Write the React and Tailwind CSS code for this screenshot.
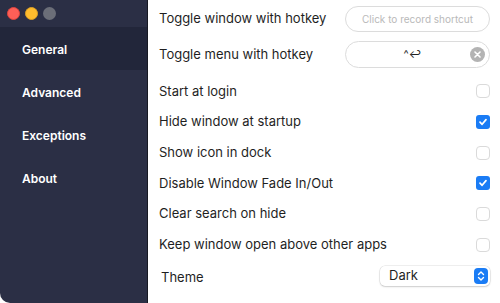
import { useState } from "react";

const FONT = { fontFamily: "Inter, 'Liberation Sans', sans-serif" };

const navItems = ["General", "Advanced", "Exceptions", "About"];

const settings = [
  { label: "Start at login", checked: false },
  { label: "Hide window at startup", checked: true },
  { label: "Show icon in dock", checked: false },
  { label: "Disable Window Fade In/Out", checked: true },
  { label: "Clear search on hide", checked: false },
  { label: "Keep window open above other apps", checked: false },
];

function Checkbox({ checked, onChange }) {
  if (checked) {
    return (
      <button
        onClick={onChange}
        className="w-[14px] h-[14px] rounded-[3px] bg-[#1a7cf5] flex items-center justify-center"
      >
        <svg width="10" height="10" viewBox="0 0 10 10">
          <path d="M2 5.2 L4.1 7.3 L8 2.6" fill="none" stroke="white" strokeWidth="1.7" strokeLinecap="round" strokeLinejoin="round" />
        </svg>
      </button>
    );
  }
  return (
    <button
      onClick={onChange}
      className="w-[14px] h-[14px] rounded-[4px] bg-white border border-[#dadada]"
    />
  );
}

function Sidebar({ active, setActive }) {
  return (
    <div className="w-[148px] shrink-0 bg-[#2b2f45] border-r border-[#171923] rounded-bl-[10px] flex flex-col">
      <div className="h-[27px] flex items-center gap-[5px] pl-[7px]">
        <span className="w-[13px] h-[13px] rounded-full bg-[#fe5f57] border border-[#e0443e]" />
        <span className="w-[13px] h-[13px] rounded-full bg-[#febc2e] border border-[#dea123]" />
        <span className="w-[13px] h-[13px] rounded-full bg-[#6b6e78]" />
      </div>
      {navItems.map((item) => (
        <button
          key={item}
          onClick={() => setActive(item)}
          className={
            "h-[43px] text-left pl-[22px] pt-[2px] text-[12px] font-semibold text-white " +
            (active === item ? "bg-[#22263a]" : "")
          }
        >
          {item}
        </button>
      ))}
    </div>
  );
}

export default function App() {
  const [active, setActive] = useState("General");
  const [values, setValues] = useState(settings.map((s) => s.checked));

  function toggle(i) {
    const next = [...values];
    next[i] = !next[i];
    setValues(next);
  }

  return (
    <div className="w-[500px] h-[303px] flex bg-white overflow-hidden" style={FONT}>
      <Sidebar active={active} setActive={setActive} />
      <div className="flex-1 flex flex-col pl-[11px] pr-[10px] text-[13px] text-[#1f1f1f]">
        <div className="flex items-center justify-between h-[26px] mt-[6px]">
          <span>Toggle window with hotkey</span>
          <div className="w-[145px] h-[26px] rounded-full border border-[#dcdcdc] flex items-center justify-center text-[10px] text-[#b9b9b9]">
            Click to record shortcut
          </div>
        </div>
        <div className="flex items-center justify-between h-[27px] mt-[9px]">
          <span>Toggle menu with hotkey</span>
          <div className="w-[145px] h-[27px] rounded-full border border-[#dcdcdc] flex items-center relative">
            <span className="flex-1 text-center text-[11px] text-[#222] pr-[10px]">^↩</span>
            <span className="absolute right-[4px] w-[15px] h-[15px] rounded-full bg-[#b3b3b3] flex items-center justify-center">
              <svg width="7" height="7" viewBox="0 0 7 7">
                <path d="M1 1 L6 6 M6 1 L1 6" stroke="white" strokeWidth="1.6" strokeLinecap="round" />
              </svg>
            </span>
          </div>
        </div>
        <div className="flex flex-col mt-[8px]">
          {settings.map((s, i) => (
            <div key={s.label} className="flex items-center justify-between h-[30.7px]">
              <span>{s.label}</span>
              <Checkbox checked={values[i]} onChange={() => toggle(i)} />
            </div>
          ))}
        </div>
        <div className="flex items-center justify-between h-[30px] mt-[1px] pl-[2px]">
          <span className="mt-[3px]">Theme</span>
          <div className="w-[110px] h-[20px] rounded-[5px] bg-white shadow-[0_0_0_0.5px_rgba(0,0,0,0.12),0_1px_2px_rgba(0,0,0,0.15)] flex items-center justify-between pl-[9px] pr-[2px]">
            <span className="text-[13px]">Dark</span>
            <span className="w-[14px] h-[16px] rounded-[4px] bg-[#1a7cf5] flex items-center justify-center">
              <svg width="8" height="12" viewBox="0 0 8 12">
                <path d="M1.5 4.5 L4 2 L6.5 4.5 M1.5 7.5 L4 10 L6.5 7.5" fill="none" stroke="white" strokeWidth="1.4" strokeLinecap="round" strokeLinejoin="round" />
              </svg>
            </span>
          </div>
        </div>
      </div>
    </div>
  );
}
